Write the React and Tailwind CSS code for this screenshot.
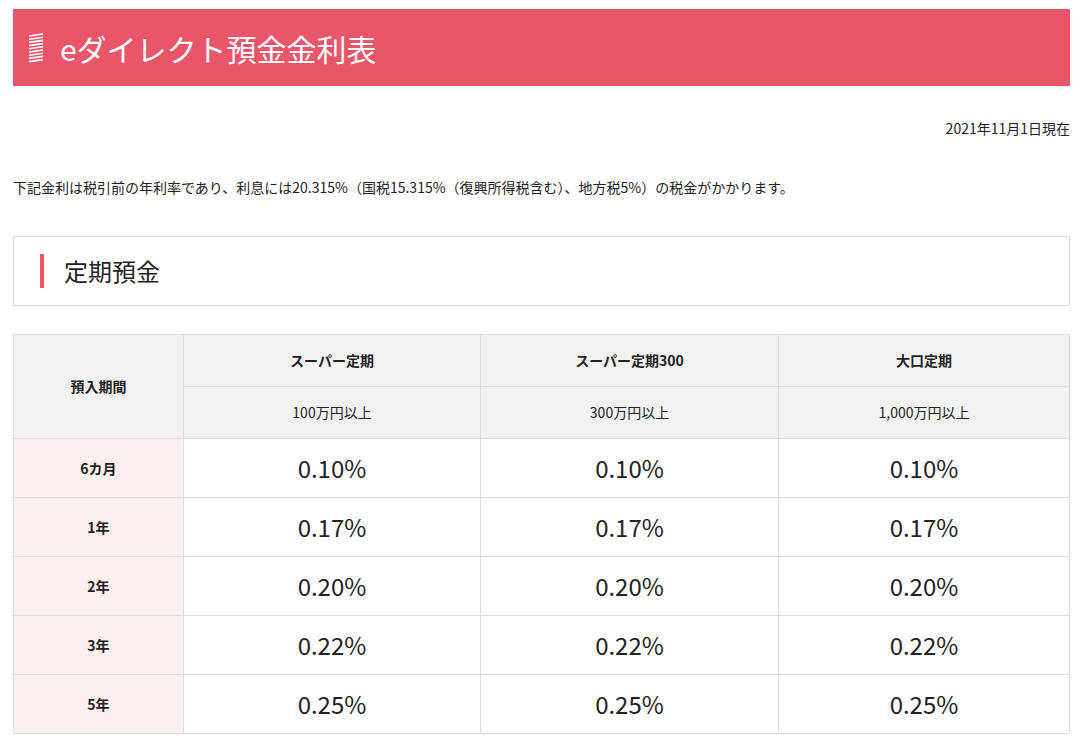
const rows = [
  ["6カ月", "0.10%"],
  ["1年", "0.17%"],
  ["2年", "0.20%"],
  ["3年", "0.22%"],
  ["5年", "0.25%"],
];

export default function App() {
  return (
    <div className="min-h-[747px] bg-white px-[13px] pt-[9px] text-[#222]" style={{ fontFamily: "'Noto Sans CJK JP', 'Noto Sans', sans-serif" }}>
      <div className="flex h-[77px] items-center gap-[16px] bg-[#e9566a] pl-[15px] text-white">
        <svg width="16" height="30" viewBox="0 0 16 30">
          {[0, 1, 2, 3, 4, 5, 6, 7, 8].map((i) => (
            <line key={i} x1="1" y1={3 + i * 3.2} x2="15" y2={1 + i * 3.2} stroke="white" strokeWidth="1.6" />
          ))}
        </svg>
        <h1 className="text-[30px] leading-none">eダイレクト預金金利表</h1>
      </div>
      <p className="mt-[32px] text-right text-[14px]">2021年11月1日現在</p>
      <p className="mt-[38px] text-[14px]">下記金利は税引前の年利率であり、利息には20.315%（国税15.315%（復興所得税含む）、地方税5%）の税金がかかります。</p>
      <div className="mt-[38px] flex h-[70px] items-center border border-[#ddd] pl-[26px]">
        <div className="h-[34px] w-[4px] bg-[#e9566a]" />
        <h2 className="ml-[20px] text-[24px]">定期預金</h2>
      </div>
      <table className="mt-[28px] w-full border-collapse text-center text-[14px]">
        <thead>
          <tr className="bg-[#f2f2f2]">
            <th rowSpan={2} className="w-[170px] border border-[#ddd] font-bold">預入期間</th>
            <th className="h-[52px] w-[297px] border border-[#ddd] font-bold">スーパー定期</th>
            <th className="w-[298px] border border-[#ddd] font-bold">スーパー定期300</th>
            <th className="border border-[#ddd] font-bold">大口定期</th>
          </tr>
          <tr className="bg-[#f2f2f2]">
            <td className="h-[52px] border border-[#ddd]">100万円以上</td>
            <td className="border border-[#ddd]">300万円以上</td>
            <td className="border border-[#ddd]">1,000万円以上</td>
          </tr>
        </thead>
        <tbody>
          {rows.map(([p, r]) => (
            <tr key={p}>
              <th className="h-[59px] border border-[#ddd] bg-[#fcefef] font-bold">{p}</th>
              {[0, 1, 2].map((i) => (
                <td key={i} className="border border-[#ddd] text-[24px]">{r}</td>
              ))}
            </tr>
          ))}
        </tbody>
      </table>
    </div>
  );
}
